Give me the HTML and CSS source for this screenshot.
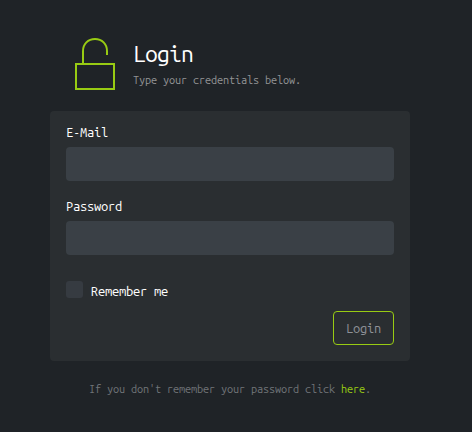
FILE: index.html
```html
<!DOCTYPE html>
<html lang="en">
<head>
<meta charset="utf-8">
<title>Login</title>
<link rel="stylesheet" href="styles.css">
</head>
<body>
<main class="login">
  <header class="header">
    <svg class="lock" width="42" height="54" viewBox="0 0 42 54" fill="none" stroke="#98cb13" stroke-width="2">
      <path d="M2 27H40V52H2Z"/>
      <path d="M9 27V14C9 7 14 2 21 2S33 7 33 14V18"/>
    </svg>
    <div class="heading">
      <h1 class="title">Login</h1>
      <p class="subtitle">Type your credentials below.</p>
    </div>
  </header>
  <form class="panel">
    <label class="label" for="email">E-Mail</label>
    <input class="field" id="email" type="text">
    <label class="label" for="password">Password</label>
    <input class="field" id="password" type="password">
    <label class="remember"><input class="checkbox" type="checkbox"><span class="remember-text">Remember me</span></label>
    <button class="submit" type="button">Login</button>
  </form>
  <p class="hint">If you don't remember your password click <a class="link" href="#">here</a>.</p>
</main>
</body>
</html>
```

FILE: styles.css
```css
* {
  box-sizing: border-box;
}

body {
  margin: 0;
  min-height: 432px;
  background: #1f2327;
  color: #fff;
  font: 13px/20px "Ubuntu Mono", "DejaVu Sans Mono", monospace;
  letter-spacing: -0.28px;
}

.login {
  width: 360px;
  margin: 0 0 0 50px;
  padding-top: 37px;
}

.header {
  display: flex;
  height: 74px;
  padding-left: 24px;
  gap: 17px;
}

.lock {
  flex: none;
}

.title {
  margin: 0;
  padding-top: 2px;
  font-size: 23px;
  font-weight: 400;
  line-height: 30px;
  letter-spacing: -0.88px;
}

.subtitle,
.hint {
  margin: 0;
  font-size: 11px;
  line-height: 16px;
  letter-spacing: -0.16px;
  white-space: nowrap;
}

.subtitle {
  padding-top: 3px;
  color: #929395;
}

.panel {
  display: flex;
  flex-direction: column;
  height: 250px;
  padding: 12px 16px 16px;
  border-radius: 4px;
  background: #2a2e31;
}

.label {
  height: 24px;
  line-height: 19px;
}

.field {
  flex: none;
  width: 100%;
  height: 34px;
  margin: 0 0 16px;
  padding: 0 10px;
  border: 0;
  border-radius: 4px;
  background: #3a4046;
  color: #fff;
  font: inherit;
}

.remember {
  display: flex;
  height: 20px;
  margin-top: 10px;
  gap: 8px;
  line-height: 21px;
}

.checkbox {
  appearance: none;
  width: 17px;
  height: 17px;
  margin: 0;
  border-radius: 3px;
  background: #363b41;
}

.submit {
  align-self: flex-end;
  width: 61px;
  height: 34px;
  margin-top: 10px;
  padding: 0;
  border: 1px solid #98cb13;
  border-radius: 4px;
  background: transparent;
  color: #8e9197;
  font: inherit;
  letter-spacing: inherit;
}

.hint {
  padding-top: 20px;
  color: #707478;
  text-align: center;
}

.link {
  color: #98cb13;
  text-decoration: none;
}
```
